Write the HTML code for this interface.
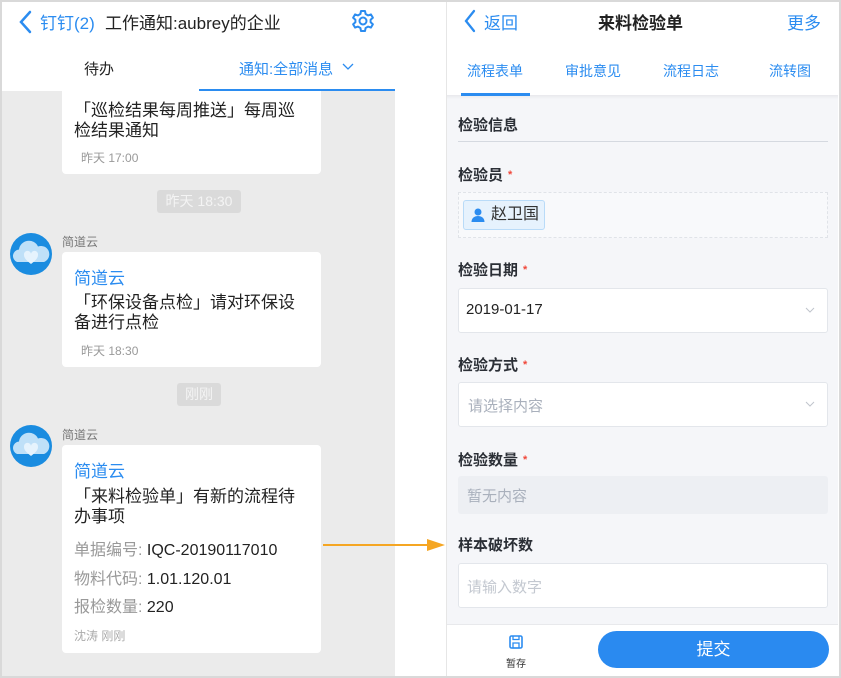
<!DOCTYPE html>
<html><head><meta charset="utf-8"><style>
*{margin:0;padding:0;box-sizing:border-box}
body{width:841px;height:678px;position:relative;background:#fff;font-family:"Liberation Sans","Noto Sans CJK SC",sans-serif;overflow:hidden}
.a{position:absolute;white-space:nowrap}
.frame{position:absolute;left:0;top:0;width:841px;height:678px;border:2px solid #d9d9d9;pointer-events:none}
.bub{position:absolute;left:62px;width:259px;background:#fff;border-radius:4px}
.pill{position:absolute;background:#dadada;color:#f4f4f4;font-size:14px;text-align:center;line-height:23px;border-radius:3px}
.nm{font-size:12px;color:#777}
.t{font-size:17px;color:#222}
.lbl{font-size:15px;font-weight:bold;color:#2b2f36;line-height:20px}
.star{color:#f0473a;font-size:11px;margin-left:5px;position:relative;top:-2px}
.box{position:absolute;left:458px;width:370px;background:#fff;border:1px solid #e3e6eb;border-radius:3px}
.chev{position:absolute;right:12px;top:50%;margin-top:-4px}
</style></head><body>
<!-- left panel -->
<div class="a" style="left:2px;top:2px;width:393px;height:89px;background:#fff"></div>
<div class="a" style="left:2px;top:91px;width:393px;height:586px;background:#ebebeb"></div>
<svg class="a" style="left:18px;top:10px" width="16" height="24" viewBox="0 0 16 24"><path d="M12 2 L3 12 L12 22" fill="none" stroke="#2b8cf0" stroke-width="2.5" stroke-linecap="round"/></svg>
<div class="a" style="left:40px;top:9px;font-size:17px;color:#2b8cf0">钉钉(2)</div>
<div class="a" style="left:105px;top:9px;font-size:17px;color:#222">工作通知:aubrey的企业</div>
<svg class="a" style="left:351px;top:9px" width="24" height="24" viewBox="0 0 24 24"><g fill="none" stroke="#2b8cf0" stroke-width="2"><path d="M10 2h4l.6 3 2.4 1.4 2.9-1 2 3.4-2.3 2v2.4l2.3 2-2 3.4-2.9-1-2.4 1.4-.6 3h-4l-.6-3-2.4-1.4-2.9 1-2-3.4 2.3-2v-2.4l-2.3-2 2-3.4 2.9 1L9.4 5z" stroke-linejoin="round"/><circle cx="12" cy="12" r="3.5"/></g></svg>
<div class="a" style="left:84px;top:58px;font-size:15px;color:#222">待办</div>
<div class="a" style="left:239px;top:58px;font-size:15px;color:#2b8cf0">通知:全部消息</div>
<svg class="a" style="left:342px;top:63px" width="12" height="8" viewBox="0 0 12 8"><path d="M1 1l5 5 5-5" fill="none" stroke="#2b8cf0" stroke-width="1.3"/></svg>
<div class="a" style="left:199px;top:89px;width:196px;height:2px;background:#2b8cf0"></div>

<div class="bub" style="top:91px;height:83px;border-radius:0 0 4px 4px">
<div class="a t" style="left:12px;top:10px;line-height:20px;white-space:normal;width:228px">「巡检结果每周推送」每周巡检结果通知</div>
<div class="a" style="left:19px;top:58px;font-size:12px;color:#999">昨天 17:00</div>
</div>
<div class="pill" style="left:157px;top:190px;width:84px">昨天 18:30</div>

<svg class="a" style="left:10px;top:233px" width="42" height="42" viewBox="0 0 42 42"><circle cx="21" cy="21" r="21" fill="#1a8ce0"/><path d="M7 29a6.5 6.5 0 0 1 2-12.5 10 10 0 0 1 19-3 7.5 7.5 0 0 1 6 15.5z" fill="#bfe0f8"/><path d="M21 31c-6-4.5-7-7-7-9a3.5 3.5 0 0 1 7-1.2 3.5 3.5 0 0 1 7 1.2c0 2-1 4.5-7 9z" fill="#e6f3fd"/></svg>
<div class="a nm" style="left:62px;top:233px">简道云</div>
<div class="bub" style="top:252px;height:115px">
<div class="a" style="left:12px;top:12px;font-size:17px;color:#2b8cf0">简道云</div>
<div class="a t" style="left:12px;top:41px;line-height:20px;white-space:normal;width:228px">「环保设备点检」请对环保设备进行点检</div>
<div class="a" style="left:19px;top:90px;font-size:12px;color:#999">昨天 18:30</div>
</div>
<div class="pill" style="left:177px;top:383px;width:44px">刚刚</div>

<svg class="a" style="left:10px;top:425px" width="42" height="42" viewBox="0 0 42 42"><circle cx="21" cy="21" r="21" fill="#1a8ce0"/><path d="M7 29a6.5 6.5 0 0 1 2-12.5 10 10 0 0 1 19-3 7.5 7.5 0 0 1 6 15.5z" fill="#bfe0f8"/><path d="M21 31c-6-4.5-7-7-7-9a3.5 3.5 0 0 1 7-1.2 3.5 3.5 0 0 1 7 1.2c0 2-1 4.5-7 9z" fill="#e6f3fd"/></svg>
<div class="a nm" style="left:62px;top:426px">简道云</div>
<div class="bub" style="top:445px;height:208px">
<div class="a" style="left:12px;top:12px;font-size:17px;color:#2b8cf0">简道云</div>
<div class="a t" style="left:12px;top:42px;line-height:20px;white-space:normal;width:228px">「来料检验单」有新的流程待办事项</div>
<div class="a" style="left:12px;top:91px;font-size:16px;color:#999">单据编号: <span style="color:#222">IQC-20190117010</span></div>
<div class="a" style="left:12px;top:120px;font-size:16px;color:#999">物料代码: <span style="color:#222">1.01.120.01</span></div>
<div class="a" style="left:12px;top:148px;font-size:16px;color:#999">报检数量: <span style="color:#222">220</span></div>
<div class="a" style="left:12px;top:182px;font-size:12px;color:#aaa">沈涛 刚刚</div>
</div>
<svg class="a" style="left:323px;top:538px" width="124" height="14" viewBox="0 0 124 14"><path d="M0 7H108" stroke="#f5a623" stroke-width="2"/><path d="M104 1 L122 7 L104 13z" fill="#f5a623"/></svg>

<!-- right panel -->
<div class="a" style="left:446px;top:2px;width:1px;height:676px;background:#e6e6e6"></div>
<div class="a" style="left:447px;top:96px;width:391px;height:528px;background:#f5f6f9"></div>
<div class="a" style="left:447px;top:95px;width:391px;height:4px;background:linear-gradient(#e8e9ec,#f5f6f9)"></div>
<svg class="a" style="left:463px;top:9px" width="14" height="24" viewBox="0 0 14 24"><path d="M11 2 L3 12 L11 22" fill="none" stroke="#2b8cf0" stroke-width="2.3" stroke-linecap="round"/></svg>
<div class="a" style="left:484px;top:9px;font-size:17px;color:#2b8cf0">返回</div>
<div class="a" style="left:598px;top:9px;font-size:17px;font-weight:bold;color:#222">来料检验单</div>
<div class="a" style="left:787px;top:9px;font-size:17px;color:#2b8cf0">更多</div>
<div class="a" style="left:467px;top:61px;font-size:14px;color:#2b8cf0">流程表单</div>
<div class="a" style="left:565px;top:61px;font-size:14px;color:#2b8cf0">审批意见</div>
<div class="a" style="left:663px;top:61px;font-size:14px;color:#2b8cf0">流程日志</div>
<div class="a" style="left:769px;top:61px;font-size:14px;color:#2b8cf0">流转图</div>
<div class="a" style="left:461px;top:93px;width:69px;height:3px;background:#2b8cf0"></div>

<div class="a lbl" style="left:458px;top:116px">检验信息</div>
<div class="a" style="left:458px;top:141px;width:370px;height:1px;background:#d5d9e0"></div>
<div class="a lbl" style="left:458px;top:166px">检验员<span class="star">*</span></div>
<div class="a" style="left:458px;top:192px;width:370px;height:46px;border:1px dashed #e0e3e8;background:#f8f9fb"></div>
<div class="a" style="left:463px;top:200px;width:82px;height:30px;background:#e6f2fd;border:1px solid #b9dbf8;border-radius:3px"></div>
<svg class="a" style="left:470px;top:207px" width="16" height="16" viewBox="0 0 16 16"><circle cx="8" cy="5" r="3.5" fill="#2b8cf0"/><path d="M1.5 15c0-4 3-6 6.5-6s6.5 2 6.5 6z" fill="#2b8cf0"/></svg>
<div class="a" style="left:491px;top:205px;font-size:16px;color:#333;line-height:20px">赵卫国</div>

<div class="a lbl" style="left:458px;top:261px">检验日期<span class="star">*</span></div>
<div class="box" style="top:288px;height:45px"><div class="a" style="left:7px;top:12px;font-size:15px;color:#222">2019-01-17</div><svg class="chev" width="10" height="7" viewBox="0 0 10 7"><path d="M1 1l4 4 4-4" fill="none" stroke="#c0c4cc" stroke-width="1"/></svg></div>
<div class="a lbl" style="left:458px;top:356px">检验方式<span class="star">*</span></div>
<div class="box" style="top:382px;height:45px"><div class="a" style="left:9px;top:12px;font-size:15px;color:#a9b0bc">请选择内容</div><svg class="chev" width="10" height="7" viewBox="0 0 10 7"><path d="M1 1l4 4 4-4" fill="none" stroke="#c0c4cc" stroke-width="1"/></svg></div>
<div class="a lbl" style="left:458px;top:451px">检验数量<span class="star">*</span></div>
<div class="a" style="left:458px;top:476px;width:370px;height:38px;background:#edeff3;border-radius:3px"><div class="a" style="left:9px;top:9px;font-size:15px;color:#a9b0bc">暂无内容</div></div>
<div class="a lbl" style="left:458px;top:536px">样本破坏数</div>
<div class="box" style="top:563px;height:45px"><div class="a" style="left:8px;top:12px;font-size:15px;color:#c3c8d0">请输入数字</div></div>

<div class="a" style="left:447px;top:624px;width:391px;height:54px;background:#fff;border-top:1px solid #e8e9ec"></div>
<svg class="a" style="left:509px;top:635px" width="14" height="14" viewBox="0 0 14 14"><rect x="1" y="1" width="12" height="12" rx="1.5" fill="none" stroke="#2b8cf0" stroke-width="1.6"/><path d="M4 1v3.5h6V1M4 8h6v5H4z" fill="none" stroke="#2b8cf0" stroke-width="1.3"/></svg>
<div class="a" style="left:506px;top:655px;font-size:10px;color:#333">暂存</div>
<div class="a" style="left:598px;top:631px;width:231px;height:37px;background:#2a8af0;border-radius:19px;color:#fff;font-size:17px;text-align:center;line-height:37px">提交</div>
<div class="frame"></div>
</body></html>
